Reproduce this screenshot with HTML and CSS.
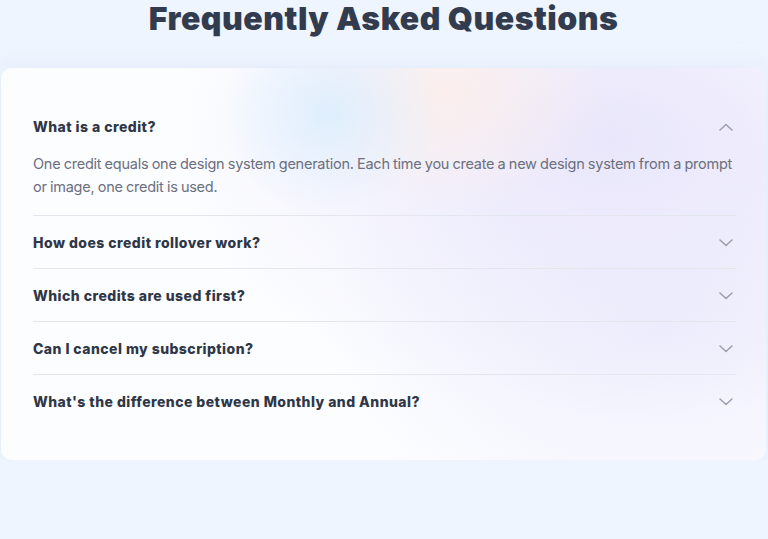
FILE: index.html
```
<!DOCTYPE html>
<html lang="en">

<head>
    <meta charset="UTF-8">
    <meta name="viewport" content="width=device-width, initial-scale=1.0">
    <title>FAQ</title>
    <link rel="stylesheet" href="styles.css">
</head>

<body>
    <section class="faq">
        <h2 class="faq-title">Frequently Asked Questions</h2>

        <div class="faq-card">
            <div class="faq-item open">
                <button class="faq-question">
                    <span>What is a credit?</span>
                    <svg class="chevron" width="14" height="8" viewBox="0 0 14 8" fill="none">
                        <path d="M1 7L7 1.5L13 7" stroke="currentColor" stroke-width="1.5" stroke-linecap="round" stroke-linejoin="round" />
                    </svg>
                </button>
                <div class="faq-answer">
                    One credit equals one design system generation. Each time you create a new design system from a prompt or image, one credit is used.
                </div>
            </div>

            <div class="faq-item">
                <button class="faq-question">
                    <span>How does credit rollover work?</span>
                    <svg class="chevron" width="14" height="8" viewBox="0 0 14 8" fill="none">
                        <path d="M1 1L7 6.5L13 1" stroke="currentColor" stroke-width="1.5" stroke-linecap="round" stroke-linejoin="round" />
                    </svg>
                </button>
            </div>

            <div class="faq-item">
                <button class="faq-question">
                    <span>Which credits are used first?</span>
                    <svg class="chevron" width="14" height="8" viewBox="0 0 14 8" fill="none">
                        <path d="M1 1L7 6.5L13 1" stroke="currentColor" stroke-width="1.5" stroke-linecap="round" stroke-linejoin="round" />
                    </svg>
                </button>
            </div>

            <div class="faq-item">
                <button class="faq-question">
                    <span>Can I cancel my subscription?</span>
                    <svg class="chevron" width="14" height="8" viewBox="0 0 14 8" fill="none">
                        <path d="M1 1L7 6.5L13 1" stroke="currentColor" stroke-width="1.5" stroke-linecap="round" stroke-linejoin="round" />
                    </svg>
                </button>
            </div>

            <div class="faq-item">
                <button class="faq-question">
                    <span>What's the difference between Monthly and Annual?</span>
                    <svg class="chevron" width="14" height="8" viewBox="0 0 14 8" fill="none">
                        <path d="M1 1L7 6.5L13 1" stroke="currentColor" stroke-width="1.5" stroke-linecap="round" stroke-linejoin="round" />
                    </svg>
                </button>
            </div>
        </div>
    </section>
</body>

</html>
```

FILE: styles.css
```
body {
    margin: 0;
    background: #eff5fe;
    font-family: 'Inter', 'Noto Sans', sans-serif;
    color: #2f3747;
}

.faq {
    padding: 0 2px 0 1px;
}

.faq-title {
    margin: 0 0 30px;
    text-align: center;
    font-size: 32px;
    line-height: 38px;
    font-weight: 900;
    letter-spacing: 0.5px;
    color: #333c4f;
}

/* soft colour wash behind the list */
.faq-card {
    padding: 32px 30px 33px 32px;
    border-radius: 10px;
    background:
        radial-gradient(ellipse 110px 100px at 328px 45px, rgba(220, 238, 253, 0.9), transparent),
        radial-gradient(ellipse 160px 120px at 445px 25px, rgba(253, 238, 234, 0.85), transparent),
        radial-gradient(ellipse 440px 280px at 610px 70px, rgba(233, 230, 251, 1), transparent),
        radial-gradient(ellipse 340px 240px at 660px 250px, rgba(236, 237, 252, 0.9), transparent),
        #fcfdff;
    box-shadow: 0 0 24px rgba(200, 214, 240, 0.35);
}

.faq-item + .faq-item {
    border-top: 1px solid #e4e6ee;
}

.faq-question {
    display: flex;
    align-items: center;
    justify-content: space-between;
    width: 100%;
    padding: 18px 3px 17px 0;
    border: 0;
    background: none;
    font-family: inherit;
    font-size: 14px;
    line-height: 17px;
    font-weight: 800;
    letter-spacing: 0.45px;
    color: #2f3747;
    text-align: left;
}

.chevron {
    color: #9a9ead;
}

.faq-answer {
    padding: 0 0 17px;
    font-size: 14.5px;
    line-height: 23px;
    letter-spacing: -0.25px;
    word-spacing: -0.5px;
    color: #6b6f7e;
}
```
